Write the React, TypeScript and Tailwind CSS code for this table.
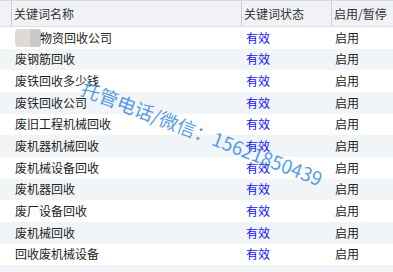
import React from "react";

const rows = [
  "物资回收公司",
  "废钢筋回收",
  "废铁回收多少钱",
  "废铁回收公司",
  "废旧工程机械回收",
  "废机器机械回收",
  "废机械设备回收",
  "废机器回收",
  "废厂设备回收",
  "废机械回收",
  "回收废机械设备",
];

export default function App() {
  return (
    <div
      className="relative w-[393px] h-[272px] overflow-hidden bg-white text-[12px] leading-none"
      style={{ fontFamily: '"Noto Sans CJK SC", "Noto Sans", sans-serif' }}
    >
      <div className="flex h-[27px] bg-[#f0f2f5] border-t border-[#d5d9e0] border-b border-b-[#dde0e6] text-[#333]">
        <div className="w-[12px] border-r border-[#c8ccd4]" />
        <div className="w-[230px] border-r border-[#c8ccd4] flex items-center pl-[2px]">关键词名称</div>
        <div className="w-[90px] border-r border-[#c8ccd4] flex items-center pl-[2px]">关键词状态</div>
        <div className="flex-1 flex items-center pl-[2px]">启用/暂停</div>
      </div>
      {rows.map((name, i) => (
        <div
          key={i}
          className={`flex h-[21.67px] items-center ${i % 2 === 1 ? "bg-[#f2f5f7]" : "bg-white"}`}
        >
          <div className="w-[15px]" />
          <div className="w-[231px] flex items-center text-[#222]">
            {i === 0 && (
              <span className="flex h-[18px] -mr-[1px]">
                <span className="w-[15px] h-[18px] rounded-l-[4px] bg-[#dedad7]" />
                <span className="w-[11px] h-[18px] rounded-r-[3px] bg-[#c9c9c9]" />
              </span>
            )}
            {name}
          </div>
          <div className="w-[89px] text-[#1010ff]">有效</div>
          <div className="flex-1 text-[#222]">启用</div>
        </div>
      ))}
      <div className="h-[10px] bg-[#f2f5f7]" />
      <span
        className="absolute left-[62px] top-[120px] w-[280px] text-center text-[19px] leading-[26px] text-[#2f86e0] opacity-80 whitespace-nowrap rotate-[21deg]"
      >
        托管电话/微信：15621850439
      </span>
    </div>
  );
}
